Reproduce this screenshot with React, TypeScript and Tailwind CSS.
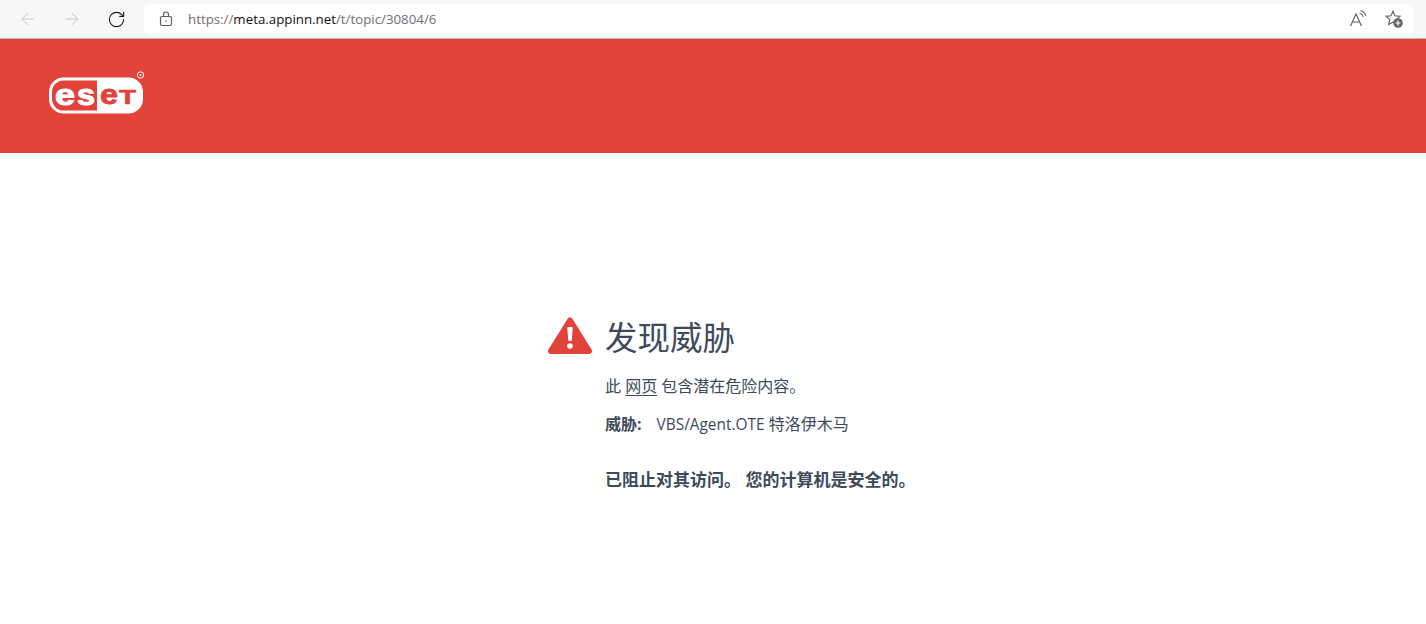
import { ArrowLeft, ArrowRight, RotateCw } from 'lucide-react';

const cjk = 'font-["Segoe_UI","Open_Sans","Noto_Sans_CJK_SC",sans-serif]';

function EsetLogo() {
  return (
    <svg width="98" height="44" viewBox="0 0 98 44" className="block">
      <rect x="2.500" y="9" width="91" height="33" rx="13" fill="none" stroke="#fff" strokeWidth="3" />
      <path d="M49 10h32a12 12 0 0 1 12 12v7a12 12 0 0 1-12 12H49z" fill="#fff" />
      <g fontFamily="Liberation Sans, sans-serif" fontWeight="700">
        <text x="7" y="35" fontSize="30" fill="#fff" stroke="#fff" strokeWidth="1" textLength="20" lengthAdjust="spacingAndGlyphs">e</text>
        <text x="29" y="35" fontSize="30" fill="#fff" stroke="#fff" strokeWidth="1" textLength="18" lengthAdjust="spacingAndGlyphs">s</text>
        <text x="52" y="34" fontSize="27" fill="#e1433a" stroke="#e1433a" strokeWidth="0.8" textLength="18" lengthAdjust="spacingAndGlyphs">e</text>
        <text x="71" y="34" fontSize="20" fill="#e1433a" stroke="#e1433a" strokeWidth="0.6" textLength="17" lengthAdjust="spacingAndGlyphs">T</text>
      </g>
      <circle cx="92.500" cy="5" r="3.200" fill="none" stroke="#fff" strokeWidth="1" />
      <circle cx="92.500" cy="5" r="1" fill="#fff" />
    </svg>
  );
}

function TabBar() {
  return (
    <div className="flex h-[39px] items-center border-b border-[#b8b8b8] bg-[#f7f7f7] pl-[18px] pr-[13px]">
      <ArrowLeft size={20} strokeWidth={1.2} className="text-[#c9c9c9]" />
      <ArrowRight size={20} strokeWidth={1.2} className="ml-[24px] text-[#c9c9c9]" />
      <RotateCw size={19} strokeWidth={1.4} className="ml-[25px] text-[#1a1a1a]" />
      <div className="ml-[18px] flex h-[30px] flex-1 items-center rounded-[5px] bg-white pl-[15px] pr-[9px]">
        <svg width="14" height="16" viewBox="0 0 14 16" fill="none" stroke="#5f5f5f" strokeWidth="1.2">
          <rect x="1.5" y="5.5" width="11" height="9" rx="1.5" />
          <path d="M4.5 5.500V3.500a2.500 2.500 0 0 1 5 0v2" />
          <circle cx="7" cy="10" r="0.8" fill="#5f5f5f" stroke="none" />
        </svg>
        <div className="ml-[15px] flex-1 pt-[1px] font-['Open_Sans',sans-serif] text-[13.3px] text-[#6f6f6f]">
          https://<span className="text-[#111]">meta.appinn.net</span>/t/topic/30804/6
        </div>
        <svg width="18" height="18" viewBox="0 0 18 18" fill="none" stroke="#666" strokeWidth="1.2">
          <path d="M1.500 16 7 4l5.500 12M3.400 12h7.200" />
          <path d="M10.500 3c1.800.5 3.200 1.800 3.800 3.800M11.500 .8c2.600.6 4.600 2.600 5.200 5.200" strokeWidth="1.100" />
        </svg>
        <svg width="20" height="20" viewBox="0 0 20 20" className="ml-[17px]">
          <path d="M9 2.200l2 4.600 5 .5-3.800 3.300 1.100 4.900L9 13l-4.300 2.500 1.100-4.900L2 7.300l5-.5z" fill="none" stroke="#666" strokeWidth="1.200" />
          <circle cx="14" cy="14" r="4.800" fill="#666" />
          <path d="M14 11.600v4.800M11.600 14h4.800" stroke="#fff" strokeWidth="1.200" />
        </svg>
      </div>
    </div>
  );
}

function WarningIcon() {
  return (
    <svg width="45" height="40" viewBox="0 0 45 40" className="block shrink-0">
      <path d="M22 4.500 L41 35 H3 Z" fill="#e1433a" stroke="#e1433a" strokeWidth="6" strokeLinejoin="round" />
      <path d="M19.800 11.500h4.400l-.9 13h-2.600z" fill="#fff" stroke="#fff" strokeLinejoin="round" />
      <circle cx="22" cy="30" r="2.800" fill="#fff" />
    </svg>
  );
}

export default function App() {
  return (
    <div className={`min-h-[624px] bg-white ${cjk}`}>
      <TabBar />
      <div className="flex h-[114px] items-start bg-[#e1433a] pl-[48px] pt-[31px]">
        <EsetLogo />
      </div>
      <div className="flex pl-[548px] pt-[163px]">
        <div>
          <WarningIcon />
        </div>
        <div className="ml-[12px] text-[#3e4a59]">
          <h1 className="text-[32.5px] leading-[44px]">发现威胁</h1>
          <p className="mt-[14px] text-[16px] leading-[24px]">
            此 <span className="underline underline-offset-[3px]">网页</span> 包含潜在危险内容。
          </p>
          <p className="mt-[14px] text-[16px] leading-[24px]">
            <span className="mr-[15px] font-bold">威胁:</span>
            <span className="text-[15.4px]">VBS/Agent.OTE</span> 特洛伊木马
          </p>
          <p className="mt-[31px] text-[17px] font-bold leading-[24px]">已阻止对其访问。 您的计算机是安全的。</p>
        </div>
      </div>
    </div>
  );
}
